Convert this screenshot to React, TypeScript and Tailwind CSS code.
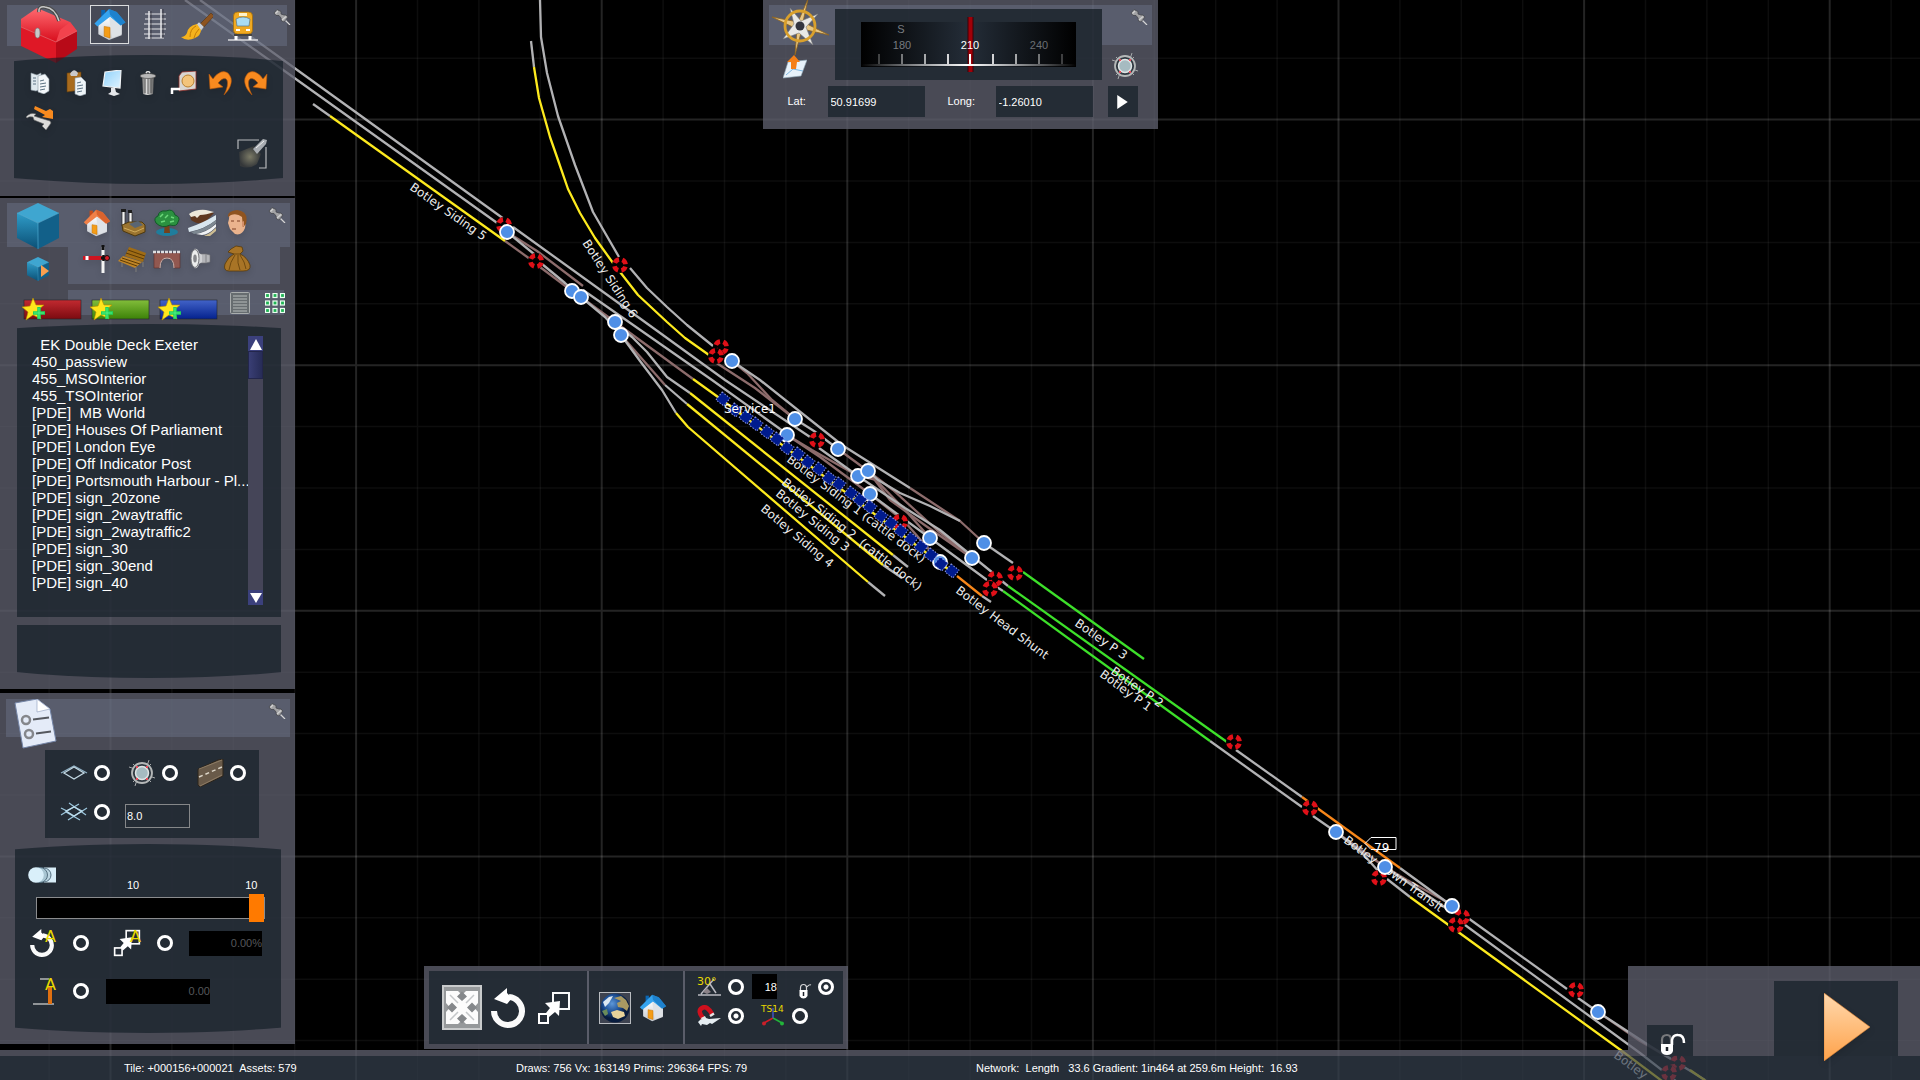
import { useState } from "react";
import type { ReactNode } from "react";

const assets = [
    "  EK Double Deck Exeter",
    "450_passview",
    "455_MSOInterior",
    "455_TSOInterior",
    "[PDE]  MB World",
    "[PDE] Houses Of Parliament",
    "[PDE] London Eye",
    "[PDE] Off Indicator Post",
    "[PDE] Portsmouth Harbour - Pl...",
    "[PDE] sign_20zone",
    "[PDE] sign_2waytraffic",
    "[PDE] sign_2waytraffic2",
    "[PDE] sign_30",
    "[PDE] sign_30end",
    "[PDE] sign_40",
];

/* ---------- Track map data ---------- */

const GRID = 61.4;

const GREY = "#b2b2b4";
const ROSE = "#8d6c6c";
const YELLOW = "#fdea1e";
const GREEN = "#3de02a";
const ORANGE = "#f8871a";

const tracks: [string, string][] = [
    // siding leads and crossovers
    [ROSE, "505,241 530,259"],
    [ROSE, "507,232 537,251 583,286"],
    [ROSE, "540,267 572,291"],
    [ROSE, "581,297 615,322 693,379"],
    [ROSE, "621,335 665,385"],
    [ROSE, "715,362 755,388 795,419"],
    [ROSE, "732,361 747,373 772,400 795,419"],
    [ROSE, "787,435 812,450 858,476"],
    [ROSE, "787,435 820,457 870,494 905,522 940,562"],
    [ROSE, "838,449 868,471 893,490 937,530 972,558"],
    [ROSE, "858,476 876,480 905,510 930,538"],
    [ROSE, "868,471 890,500 926,526 972,558"],
    [ROSE, "910,488 960,521 984,543"],
    [ROSE, "1336,832 1385,867"],
    [ROSE, "1385,867 1407,880 1447,902"],
    [ROSE, "1598,1012 1640,1041 1676,1062"],
    // running lines
    [GREY, "200,0 300,72 504,219"],
    [GREY, "185,0 300,82 500,225"],
    [GREY, "513,227 638,317 725,380 810,437"],
    [GREY, "583,290 712,380 787,434"],
    [GREY, "507,232 534,254"],
    [GREY, "542,264 565,283 581,297"],
    [GREY, "581,297 605,317 621,335"],
    [GREY, "621,335 640,361 662,390 676,413"],
    [GREY, "665,385 687,404"],
    [GREY, "621,328 632,337 647,352 667,377 690,393"],
    [GREY, "732,361 760,380 842,445 910,488"],
    [GREY, "795,419 814,431 838,449"],
    [GREY, "819,448 858,476 905,508 940,530 993,573"],
    [GREY, "868,471 878,480 900,493 930,506 960,521"],
    [GREY, "870,494 930,538 987,580"],
    [GREY, "984,543 1013,563"],
    [GREY, "997,577 1008,586"],
    [GREY, "992,584 1003,591"],
    [GREY, "313,104 330,116"],
    [GREY, "540,0 541,37 547,73 558,116 575,165 593,212 619,257"],
    [GREY, "630,268 647,288 667,307 687,325 713,346"],
    [GREY, "531,41 534,67"],
    [GREY, "893,555 908,567"],
    [GREY, "883,565 902,578"],
    [GREY, "868,582 885,596"],
    [GREY, "982,596 991,602"],
    [GREY, "1236,750 1302,797"],
    [GREY, "1210,741 1302,807"],
    [GREY, "1313,816 1336,832 1362,853 1380,873"],
    [GREY, "1387,879 1410,897"],
    [GREY, "1400,868 1452,906"],
    [GREY, "1385,867 1452,912"],
    [GREY, "1468,918 1567,989"],
    [GREY, "1465,925 1640,1053 1690,1092"],
    [GREY, "1578,998 1598,1012"],
    [GREY, "1598,1012 1650,1046 1705,1080"],
    // sidings
    [YELLOW, "330,116 505,241"],
    [YELLOW, "534,67 539,98 550,137 558,160 568,189 580,213 595,238 613,263 638,295 667,322 685,338 709,355"],
    [YELLOW, "693,379 718,397 952,572"],
    [YELLOW, "690,393 893,555"],
    [YELLOW, "687,404 883,565"],
    [YELLOW, "676,413 688,427 868,582"],
    [YELLOW, "1410,897 1622,1051 1662,1081"],
    [YELLOW, "1690,1070 1706,1081"],
    // platforms
    [GREEN, "1023,572 1144,659"],
    [GREEN, "1008,586 1227,742"],
    [GREEN, "1003,591 1210,741"],
    // occupied
    [ORANGE, "957,576 982,596"],
    [ORANGE, "1302,797 1400,868"],
];

const signals = [
    [504, 225], [536, 261], [620, 265], [721, 347], [716, 356], [817, 440], [900, 522],
    [1015, 573], [995, 579], [990, 589], [1234, 742], [1310, 808], [1379, 878], [1462, 917],
    [1456, 925], [1576, 990], [1678, 1063], [1669, 1073],
];

const junctions = [
    [507, 232], [572, 291], [581, 297], [615, 322], [621, 335], [732, 361], [795, 419], [787, 435],
    [838, 449], [858, 476], [868, 471], [870, 494], [930, 538], [940, 562], [984, 543], [972, 558],
    [1336, 832], [1385, 867], [1452, 906], [1598, 1012],
];

const wagons = [
    [723, 399], [735, 410], [746, 417], [756, 424], [767, 432], [777, 439], [787, 448], [798, 454],
    [808, 462], [819, 469], [829, 478], [839, 484], [851, 493], [860, 500], [870, 507], [881, 516],
    [891, 523], [901, 531], [911, 539], [921, 547], [931, 555], [941, 564], [952, 571],
];

const labels: [string, number, number, number][] = [
    ["Botley Siding 5", 409, 189, 35],
    ["Botley Siding 6", 582, 243, 57],
    ["Botley Siding 1 (cattle dock)", 786, 461, 37],
    ["Botley Siding 2\u00a0\u00a0(cattle dock)", 781, 484, 38],
    ["Botley Siding 3", 775, 495, 39],
    ["Botley Siding 4", 760, 510, 40],
    ["Botley Head Shunt", 955, 592, 37],
    ["Botley P 3", 1074, 625, 35],
    ["Botley P 2", 1110, 673, 35],
    ["Botley P 1", 1099, 676, 36],
    ["Botley Down Transit", 1343, 842, 36],
    ["Botley", 1613, 1057, 36],
];

function TrackMap() {
    const steps = Array.from({ length: 70 }, (_, i) => i);
    return (
        <svg className="absolute inset-0 h-full w-full" aria-label="Track map">
            <defs>
                <linearGradient id="red" x1="0" y1="0" x2="0" y2="1"><stop offset="0" stopColor="#ff6a70" /><stop offset="1" stopColor="#d80d1c" /></linearGradient>
                <linearGradient id="cube" x1="0" y1="0" x2="0" y2="1"><stop offset="0" stopColor="#2f9cc8" /><stop offset="1" stopColor="#0b5076" /></linearGradient>
                <linearGradient id="wall" x1="0" y1="0" x2="0" y2="1"><stop offset="0" stopColor="#ffffff" /><stop offset="1" stopColor="#c4c8ce" /></linearGradient>
                <linearGradient id="metal" x1="0" y1="0" x2="1" y2="0"><stop offset="0" stopColor="#6d6d6d" /><stop offset=".4" stopColor="#e2e2e2" /><stop offset="1" stopColor="#5a5a5a" /></linearGradient>
                <linearGradient id="screen" x1="0" y1="0" x2="1" y2="1"><stop offset="0" stopColor="#8fd2fb" /><stop offset="1" stopColor="#dff3ff" /></linearGradient>
                <linearGradient id="amber" x1="0" y1="0" x2="0" y2="1"><stop offset="0" stopColor="#ffd9ae" /><stop offset="1" stopColor="#ffa24a" /></linearGradient>
                <linearGradient id="dial" x1="0" y1="0" x2="1" y2="0"><stop offset="0" stopColor="#000" /><stop offset=".5" stopColor="#242d38" /><stop offset="1" stopColor="#000" /></linearGradient>
                <linearGradient id="dialLine" x1="0" y1="0" x2="1" y2="0"><stop offset="0" stopColor="#fff" stopOpacity="0" /><stop offset=".5" stopColor="#fff" /><stop offset="1" stopColor="#fff" stopOpacity="0" /></linearGradient>
                <radialGradient id="sea" cx=".4" cy=".35"><stop offset="0" stopColor="#5d97d8" /><stop offset=".6" stopColor="#1c4e94" /><stop offset="1" stopColor="#081c3e" /></radialGradient>
                <radialGradient id="beam"><stop offset="0" stopColor="#7b7a66" /><stop offset="1" stopColor="#35383a" /></radialGradient>
            </defs>
            {steps.map((i) => (
                <path
                    key={i}
                    d={`M${(110.5 + (i - 1) * GRID).toFixed(1)} 0v3000M0 ${(119.6 + (i - 1) * GRID).toFixed(1)}h5000`}
                    stroke="#fff"
                    strokeOpacity={(i - 1) % 4 === 0 ? 0.14 : 0.05}
                    strokeWidth={(i - 1) % 4 === 0 ? 2 : 1.5}
                />
            ))}
            {tracks.map(([color, points], i) => (
                <polyline key={i} points={points} fill="none" stroke={color} strokeWidth="2.3" strokeLinejoin="round" />
            ))}
            {signals.map(([x, y], i) => (
                <g key={i}>
                    <circle cx={x} cy={y} r="8" />
                    <circle
                        cx={x}
                        cy={y}
                        r="5.6"
                        fill="none"
                        stroke="#e01018"
                        strokeWidth="4.6"
                        strokeDasharray="5.4 3.4"
                        strokeDashoffset="-1.7"
                    />
                </g>
            ))}
            <g fontFamily="'DejaVu Sans', sans-serif" fontSize="12" fill="#ececec">
                {labels.map(([text, x, y, angle]) => (
                    <text key={text} x={x} y={y} transform={`rotate(${angle} ${x} ${y})`}>{text}</text>
                ))}
            </g>
            {junctions.map(([x, y], i) => (
                <circle key={i} cx={x} cy={y} r="7" fill="#4f8fe6" stroke="#fff" strokeWidth="1.8" />
            ))}
            {wagons.map(([x, y], i) => (
                <rect
                    key={i}
                    x={x - 5}
                    y={y - 5}
                    width="10"
                    height="10"
                    transform={`rotate(38 ${x} ${y})`}
                    fill="#001b8e"
                    stroke="#8d9be8"
                    strokeDasharray="1.5 1.5"
                />
            ))}
            <g fontFamily="'DejaVu Sans', sans-serif" fontSize="12" fill="#fff">
                <text x="724" y="413">Service1</text>
                <path d="M1365 843.500L1371 837.500H1396V849.500H1371Z" fill="none" stroke="#fff" />
                <text x="1374" y="852">79</text>
            </g>
        </svg>
    );
}

/* ---------- Icons ---------- */

type IconProps = { className?: string };

const Pin = () => (
    <svg className="h-4 w-[18px]" viewBox="0 0 18 16">
        <path d="M11 10L17 16" stroke="#d5d5d5" strokeWidth="1.2" />
        <path d="M1 4L4 .5L8 2.500L8 5L11 6L13 6L15 8L11 13L8.500 12L8 9L6 6.500L3 6.500Z" fill="#a2a2a4" stroke="#45464c" strokeWidth=".8" />
        <path d="M2.500 4.500L5 2M9 11L13 7.500" stroke="#d2d2d2" strokeWidth="1.2" />
    </svg>
);

const Toolbox = () => (
    <svg className="h-[58px] w-[58px] shrink-0" viewBox="0 0 58 58">
        <path d="M1 22V14L17 3L50 17L57 26L36 37Z" fill="url(#red)" />
        <path d="M1 22L36 37V58L1 41Z" fill="#df1826" />
        <path d="M36 37L57 26V44L36 58Z" fill="#b80a18" />
        <path d="M36 37L40 25L50 17L57 26Z" fill="#f2434d" />
        <path d="M1 22L36 37L57 26" fill="none" stroke="#f0656c" strokeWidth=".7" />
        <path d="M19 7Q18 1 25 2Q35 3 39 16" fill="none" stroke="#4a4a4a" strokeWidth="3.5" />
        <path d="M19 7Q18 1 25 2Q35 3 39 16" fill="none" stroke="#c9c9c9" strokeWidth="1.5" />
        <ellipse cx="17.5" cy="28" rx="2.5" ry="5" fill="#c8c8c8" stroke="#777" strokeWidth=".7" />
    </svg>
);

const House = ({ roof, dark, className }: IconProps & { roof: string; dark: string }) => (
    <svg className={className} viewBox="0 0 32 34">
        <path d="M4 16L15 8L28 17V28L15 33L4 27Z" fill="url(#wall)" />
        <path d="M15 9L18 31L28 27V17Z" fill="#dfe2e6" />
        <path d="M10 19L16 20V31L10 29Z" fill="#f49c16" stroke="#c87400" strokeWidth=".6" />
        <path d="M7 2H11V9H7Z" fill={dark} />
        <path d="M15 1L23 4L32 15L27 18L16 9L3 19L0 16Z" fill={roof} />
        <path d="M15 1L23 4L32 15L27 18L16 7Z" fill={dark} fillOpacity=".55" />
    </svg>
);

const Rails = () => (
    <svg className="h-8 w-7" viewBox="0 0 28 32" fill="none" stroke="#e3e4e8">
        <path d="M8 2V30M20 0V29" strokeWidth="1.5" />
        <path d="M4 5H25M4 10H25M3 15H25M3 20H25M3 25H24M4 29H23" strokeWidth="1.1" />
        <path d="M10 2V30M22 0V29" stroke="#2b2d33" strokeWidth=".7" />
    </svg>
);

const Brush = () => (
    <svg className="h-7 w-8" viewBox="0 0 32 28">
        <path d="M18 12L30 0L33 3L22 15Z" fill="#8d5420" stroke="#4e2c0c" strokeWidth=".5" />
        <path d="M15 12L18 9L23 14L20 18Z" fill="#c9ced6" stroke="#666" strokeWidth=".5" />
        <path d="M16 11Q7 13 6 20Q4 24 0 24Q6 29 14 25Q20 22 20 17Z" fill="#f5b21c" />
        <path d="M15 13Q9 16 9 24M18 16Q14 20 13 25" stroke="#c47b05" fill="none" />
    </svg>
);

const TrainFront = () => (
    <svg className="h-8 w-9" viewBox="0 0 36 32">
        <path d="M3 31H33" stroke="#d8d8dc" strokeWidth="1.5" />
        <path d="M11 26V31M25 26V31" stroke="#fff" strokeWidth="3" />
        <rect x="8.5" y="3" width="19" height="22" rx="4" fill="#f0a921" stroke="#a46a05" strokeWidth=".7" />
        <path d="M11 10Q18 6 25 10L24 17H12Z" fill="#a9dcf4" stroke="#58798c" strokeWidth=".7" />
        <rect x="14" y="4" width="8" height="3" fill="#fff3c9" />
        <path d="M11 21H15M21 21H25" stroke="#fff" strokeWidth="2" />
        <path d="M9 26H27" stroke="#444" strokeWidth="2" />
    </svg>
);

const Copy = () => (
    <svg className="h-[22px] w-5" viewBox="0 0 20 22">
        <path d="M1 1L7 3L11 1V17L6 19L1 18Z" fill="#dfe8ee" stroke="#8b98a3" strokeWidth=".6" />
        <path d="M8 4L15 2L19 7V19L14 22L8 20Z" fill="#f3f7fa" stroke="#8b98a3" strokeWidth=".6" />
        <path d="M3 6H6M3 9H6M3 12H6M10 9L14 8M10 12L16 11M10 15L16 14M10 18L15 17" stroke="#5c7384" />
    </svg>
);

const Paste = () => (
    <svg className="h-[26px] w-5" viewBox="0 0 20 26">
        <path d="M1 3L15 2V20L1 22Z" fill="#a86b1d" stroke="#5e3a0c" strokeWidth=".6" />
        <path d="M4 4Q8-3 12 3L11 6H5Z" fill="#c9c9cb" />
        <path d="M9 8L15 7L20 12V24L14 26L9 24Z" fill="#eef4f8" stroke="#8b98a3" strokeWidth=".6" />
        <path d="M11 13L15 12M11 16L17 15M11 19L17 18M11 22L16 21" stroke="#5c7384" />
    </svg>
);

const Monitor = () => (
    <svg className="h-[26px] w-5" viewBox="0 0 20 26">
        <path d="M3 2L19 0L18 18L1 16Z" fill="url(#screen)" stroke="#f2f5f7" strokeWidth="1.2" />
        <path d="M9 18H13L14 22L18 24L12 26L6 24L9 22Z" fill="#e5e7ea" />
    </svg>
);

const Bin = () => (
    <svg className="h-6 w-4" viewBox="0 0 16 24">
        <path d="M2 6H14L13 23Q8 25 3 23Z" fill="url(#metal)" />
        <path d="M5 8V22M8 8V23M11 8V22" stroke="#444" strokeWidth=".8" />
        <ellipse cx="8" cy="5" rx="8" ry="2.5" fill="#b7b7b7" stroke="#444" strokeWidth=".7" />
        <path d="M6 2Q8-1 10 2" stroke="#ddd" fill="none" strokeWidth="1.5" />
    </svg>
);

const Tape = () => (
    <svg className="h-6 w-7" viewBox="0 0 28 24">
        <path d="M12 1L26 0V18L9 20V5Z" fill="#d9d6d2" stroke="#8f2e2a" strokeWidth=".8" />
        <circle cx="18" cy="10" r="6" fill="#f3c47b" stroke="#b98030" />
        <path d="M1 18H10M2 17V23" stroke="#fff" strokeWidth="2.5" />
    </svg>
);

const Undo = ({ className = "" }: IconProps) => (
    <svg className={`h-6 w-6 ${className}`} viewBox="0 0 24 24">
        <path d="M1 3L2 18L15 16L10 12Q16 5 19 9Q21 14 16 24Q25 15 23 7Q20-1 13 1Q8 3 5 8Z" fill="#f88a1f" stroke="#b4560a" strokeWidth=".6" />
    </svg>
);

const Flip = () => (
    <svg className="h-6 w-7" viewBox="0 0 28 24">
        <path d="M0 11Q4 6 10 8L8 10L14 12L24 15L25 17L20 24L16 20L18 18L8 14L7 11Q3 10 1 12Z" fill="#dcdcda" stroke="#6c6c6c" strokeWidth=".6" />
        <path d="M9 0L20 5L24 3L27 5V13L16 11L19 9L8 3Z" fill="#f88a1f" />
    </svg>
);

const Torch = () => (
    <svg className="h-[30px] w-[30px]" viewBox="0 0 30 30">
        <path d="M2 13L17 7L24 15L20 25Q12 31 3 27Z" fill="url(#beam)" />
        <path d="M16 10L26 0L30 1L29 5L20 15Z" fill="#a9adb2" />
        <path d="M19 9L27 2" stroke="#f0f0f0" />
        <path d="M1 10V1H22M29 8V29H22" fill="none" stroke="#b7babd" strokeWidth="1.2" />
    </svg>
);

const Cube = ({ className }: IconProps) => (
    <svg className={className} viewBox="0 0 42 46">
        <path d="M21 0L42 10L21 20L0 10Z" fill="#3fa6d0" />
        <path d="M0 10L21 20V46L0 35Z" fill="url(#cube)" />
        <path d="M42 10L21 20V46L42 35Z" fill="#126089" />
        <path d="M0 10L21 20L42 10M21 20V46" stroke="#58b6dc" fill="none" strokeWidth=".6" />
    </svg>
);

const Factory = () => (
    <svg className="h-7 w-7" viewBox="0 0 28 28">
        <path d="M4 2H7V17H4ZM11 3H14V16H11Z" fill="#f1f1f1" stroke="#222" strokeWidth=".7" />
        <path d="M3 0H8V3H3ZM10 1H14V4H10Z" fill="#1d1d1d" />
        <path d="M4 16L11 13H24L27 16V23L17 27L5 22Z" fill="#9b742f" stroke="#4e390e" />
        <path d="M11 15L20 12L25 16L17 19Z" fill="#596573" />
        <path d="M6 19L17 23L26 19" stroke="#d1ac5c" fill="none" />
    </svg>
);

const Tree = () => (
    <svg className="h-7 w-7" viewBox="0 0 28 28">
        <ellipse cx="14" cy="23" rx="11" ry="4" fill="#1f7d9c" />
        <path d="M12 14L11 24L17 24L16 14Z" fill="#76421a" />
        <path d="M3 14Q0 9 5 7Q6 1 13 2Q20-1 22 6Q28 8 25 13Q24 18 17 16Q9 20 3 14Z" fill="#2b9140" stroke="#13582a" />
        <path d="M7 8L10 5M12 9L15 6M18 8L21 9M8 13L12 12M17 13L21 12" stroke="#6bd77a" strokeWidth="1.5" />
    </svg>
);

const Roads = () => (
    <svg className="h-7 w-7" viewBox="0 0 28 28">
        <path d="M2 6Q7 2 20 3L26 4L20 10L18 14Q10 16 3 11Z" fill="#5f371f" />
        <path d="M1 5Q8 0 18 1L26 3Q18 6 12 6L9 9L7 7L3 8Z" fill="#eee8da" />
        <path d="M0 19Q15 14 28 6V11Q17 20 1 23Z" fill="#d9e6ee" />
        <path d="M3 23Q17 20 28 11V14Q20 23 6 25Z" fill="#7d8891" />
        <path d="M8 25Q19 23 28 15V18Q20 26 14 26Z" fill="#f0f3f5" />
        <path d="M16 27Q23 24 28 19V22L22 27Z" fill="#cdbd92" />
    </svg>
);

const Face = () => (
    <svg className="h-7 w-7" viewBox="0 0 28 28">
        <path d="M6 10Q6 2 14 2Q23 2 23 11L22 19Q19 27 12 25L7 20L5 14Z" fill="#eab38d" />
        <path d="M5 8Q4 2 14 1Q26 2 23 15L20 18L19 8Q14 4 8 6Z" fill="#8f5420" />
        <path d="M8 12H11M14 12H17M9 20H13" stroke="#7c3e22" />
        <path d="M19 13L21 12V17L19 18Z" fill="#d5916b" />
    </svg>
);

const Semaphore = () => (
    <svg className="h-7 w-7" viewBox="0 0 28 28">
        <path d="M20 2V28" stroke="#f4f4f4" strokeWidth="3" />
        <path d="M20 0V5" stroke="#111" strokeWidth="3" />
        <path d="M0 13H23" stroke="#cf1420" strokeWidth="4" />
        <path d="M4 11V15" stroke="#fff" strokeWidth="3" />
        <path d="M18 13H26M20.500 10V16" stroke="#111" strokeWidth="2.5" />
        <circle cx="24" cy="13" r="2.5" fill="#d61a26" stroke="#111" />
    </svg>
);

const Bench = () => (
    <svg className="h-7 w-7" viewBox="0 0 28 28">
        <path d="M11 2L28 8L25 17L7 11Z" fill="#a06c15" />
        <path d="M5 11L24 17L17 23L0 16Z" fill="#bf8527" />
        <path d="M10 5L27 11M8 8L26 14M4 13L22 19M2 15L19 21" stroke="#5b3a05" />
        <path d="M4 18V22M18 22V27M25 17V22" stroke="#777" strokeWidth="1.2" />
    </svg>
);

const Bridge = () => (
    <svg className="h-7 w-7" viewBox="0 0 28 28">
        <path d="M1 8H27V23H21Q21 13 14 13Q7 13 7 23H1Z" fill="#925850" stroke="#5c2e29" strokeWidth=".6" />
        <path d="M7 23Q7 13 14 13Q21 13 21 23" fill="none" stroke="#cdb4ae" />
        <path d="M0 7H28" stroke="#dedfe2" strokeWidth="2.5" strokeDasharray="3 1" />
    </svg>
);

const Speaker = () => (
    <svg className="h-7 w-7" viewBox="0 0 28 28">
        <path d="M11 9H18L22 10V17L18 18H11Z" fill="#b4b5b9" stroke="#6f7074" strokeWidth=".6" />
        <path d="M6 4Q10 3 11 8L14 10V17L11 19Q10 24 6 23Z" fill="#cfd0d3" />
        <ellipse cx="7" cy="13.5" rx="4" ry="9" fill="#eceded" stroke="#77787c" />
        <ellipse cx="7" cy="13.5" rx="1.8" ry="4" fill="#85868a" />
        <path d="M18 9V18" stroke="#808185" />
    </svg>
);

const Sack = () => (
    <svg className="h-7 w-7" viewBox="0 0 28 28">
        <path d="M8 4L13 1L19 2L20 6L17 9Q24 12 27 20Q28 26 20 26H6Q0 26 2 19Q5 12 11 9L5 7Z" fill="#a87426" stroke="#5b3b08" strokeWidth=".8" />
        <path d="M11 9L17 9M12 10Q7 17 6 25M15 10Q14 18 17 25M17 10Q22 17 23 24" stroke="#704a10" fill="none" />
    </svg>
);

const FavouriteBar = ({ from, to, label }: { from: string; to: string; label: string }) => (
    <button aria-label={label} className="h-5 w-[59px]">
        <svg className="h-full w-full overflow-visible" viewBox="0 0 59 20">
            <defs>
                <linearGradient id={label} x1="0" y1="0" x2="0" y2="1"><stop offset="0" stopColor={from} /><stop offset="1" stopColor={to} /></linearGradient>
            </defs>
            <rect x="2" y="1" width="57" height="19" fill={`url(#${label})`} stroke="#22252c" strokeWidth=".6" />
            <path d="M11-1L14 6L22 6L16 11L19 20L11 16L4 21L6 13L0 8L8 7Z" fill="#ffe61c" stroke="#b98a00" strokeWidth=".6" />
            <path d="M17 8V20M11 14H23" stroke="#1fd35c" strokeWidth="3.5" />
            <path d="M17 9V19M12 14H22" stroke="#5df48b" strokeWidth=".8" />
        </svg>
    </button>
);

const ListIcon = () => (
    <svg className="h-[22px] w-5" viewBox="0 0 20 22">
        <rect x=".5" y=".5" width="19" height="21" rx="1" fill="#676d70" stroke="#a9adad" />
        <path d="M3 4H17M3 7H17M3 10H17M3 13H17M3 16H17M3 19H17" stroke="#b8bdbb" />
    </svg>
);

const GridIcon = () => (
    <svg className="h-5 w-5" viewBox="0 0 20 20">
        {[0, 7.5, 15].map((y) =>
            [0, 7.5, 15].map((x) => (
                <rect key={`${x}-${y}`} x={x + 0.5} y={y + 0.5} width="4" height="4" fill="#1fb454" stroke="#eafff0" strokeWidth="1.2" />
            ))
        )}
    </svg>
);

const Sheet = () => (
    <svg className="h-[50px] w-[43px] shrink-0" viewBox="0 0 43 50">
        <path d="M1 4L23 0L36 10L42 42L9 49Z" fill="#e4ebf8" stroke="#7586a8" />
        <path d="M23 0L36 10L23 13Z" fill="#fff" stroke="#9aa8c4" strokeWidth=".7" />
        <circle cx="12" cy="21" r="4" fill="none" stroke="#85878c" strokeWidth="2.5" />
        <circle cx="15" cy="35" r="4" fill="none" stroke="#85878c" strokeWidth="2.5" />
        <path d="M19 20.500L35 18.500M22 34.500L37 32.500" stroke="#55585f" strokeWidth="1.8" />
    </svg>
);

const Tile = () => (
    <svg className="h-4 w-7" viewBox="0 0 28 16" fill="none">
        <path d="M1 8L14 1L27 8" stroke="#8fb0c4" strokeWidth="1.3" />
        <path d="M4 8L14 2L24 8L14 14Z" stroke="#c3d8e3" strokeWidth="1.3" />
    </svg>
);

const Tiles = () => (
    <svg className="h-5 w-7" viewBox="0 0 28 20" fill="none">
        <path d="M1 6L7 9L19 2M9 1L26 13M27 6L8 18M1 13L6 10L20 18" stroke="#9cc6dc" strokeWidth="1.3" />
        <path d="M6 9L14 5L22 9L14 14Z" stroke="#bcdcec" strokeWidth="1.3" />
    </svg>
);

const MiniCompass = ({ className = "h-[26px] w-7" }: IconProps) => (
    <svg className={className} viewBox="0 0 26 26">
        <path d="M4 4L22 22M22 4L4 22M20 0L18 6M6 26L8 20M0 7L6 9M26 18L20 16" stroke="#a6a9aa" />
        <circle cx="13" cy="13" r="10" fill="#303840" stroke="#b5b8b8" strokeWidth="1.8" />
        <circle cx="13" cy="13" r="6.5" fill="#a6bbc1" stroke="#dfe4e4" strokeWidth="1.5" />
        <path d="M7 7H9M17 7H19M7 19H9M17 19H19" stroke="#e84a5a" strokeWidth="2" />
    </svg>
);

const Road = () => (
    <svg className="h-7 w-7" viewBox="0 0 28 28">
        <path d="M2 10L22 1L27 0V17L4 28L2 26Z" fill="#695a49" stroke="#2c241b" />
        <path d="M3 10L26 1M4 27L26 16" stroke="#8d7b64" />
        <path d="M3 18L26 8" stroke="#ddd6c8" strokeWidth="1.5" strokeDasharray="4 3" />
    </svg>
);

const Toggle = () => (
    <svg className="h-4 w-7" viewBox="0 0 28 16">
        <rect x="16" y=".5" width="12" height="15" fill="#d8edf8" />
        <circle cx="16" cy="8" r="7" fill="#bcd6e2" stroke="#567081" />
        <circle cx="12" cy="8" r="7.5" fill="#a8c5d2" stroke="#567081" />
        <circle cx="8" cy="8" r="7.8" fill="#d9effa" />
    </svg>
);

const RotateIcon = ({ className }: IconProps) => (
    <svg className={className} viewBox="0 0 36 40">
        <path d="M4 23A14 14 0 1 0 19 9" fill="none" stroke="#fafafa" strokeWidth="6" />
        <path d="M4 11L17 0V5L22 10L17 16Z" fill="#fff" />
    </svg>
);

const ScaleIcon = ({ className }: IconProps) => (
    <svg className={className} viewBox="0 0 32 34">
        <rect x="15" y="2" width="16" height="16" fill="none" stroke="#fafafa" strokeWidth="2" />
        <path d="M7 12L22 10L21 25L17 21L11 26L8 22L12 17Z" fill="#fff" />
        <rect x="1" y="23" width="9" height="9" fill="#252d37" stroke="#fff" strokeWidth="2" />
    </svg>
);

const HeightIcon = () => (
    <svg className="h-7 w-7" viewBox="0 0 28 28">
        <path d="M12 2H21M5 27H26" stroke="#b4b6b8" strokeWidth="1.5" />
        <path d="M22 10V27" stroke="#e07011" strokeWidth="4" />
    </svg>
);

const CompassRose = () => (
    <svg className="h-[58px] w-[58px] shrink-0 overflow-visible" viewBox="0 0 58 58">
        <path d="M36-6L31 17L57 30L30 24L23 50L25 24L0 12L26 17Z" fill="#e8c886" stroke="#91631a" strokeWidth=".8" />
        <path d="M18 3L29 16L46 9L34 22L41 40L27 28L11 34L22 19Z" fill="#e9e9e6" stroke="#7b7b7b" strokeWidth=".6" />
        <circle cx="28" cy="21" r="15" fill="none" stroke="#d9a02c" strokeWidth="2.8" />
        <circle cx="28" cy="21" r="4.5" fill="#33353f" />
    </svg>
);

const MapUp = () => (
    <svg className="h-6 w-6" viewBox="0 0 24 24">
        <path d="M5 7L24 5L18 21L0 23Z" fill="#e8f2fa" stroke="#8fa6b5" strokeWidth=".6" />
        <path d="M3 20L10 14L20 16" stroke="#7fb7e0" fill="none" />
        <path d="M11 0L17 7H14L13 14H8V7H4Z" fill="#f57f17" />
    </svg>
);

const MoveIcon = () => (
    <svg className="h-[45px] w-10" viewBox="0 0 40 45">
        <rect x="1" y="1" width="38" height="43" fill="#96999b" stroke="#c9cbcc" strokeWidth="2" />
        <path d="M4 6H16L20 10L24 6H36V18L32 22.500L36 27V39H24L20 35L16 39H4V27L8 22.500L4 18Z" fill="#fcfcfc" />
        <path d="M20 6.500L25 11.500L20 16L15 11.500ZM20 38.500L25 33.500L20 29L15 33.500ZM5 22.500L10 17.500L15 22.500L10 27.500ZM35 22.500L30 17.500L25 22.500L30 27.500Z" fill="#85888b" />
        <path d="M8 10L16 18M32 10L24 18M8 35L16 27M32 35L24 27" stroke="#c4c7c9" strokeWidth="1.5" />
    </svg>
);

const Earth = () => (
    <svg className="h-8 w-8" viewBox="0 0 32 32">
        <rect x=".5" y=".5" width="31" height="31" fill="#3e4350" stroke="#b9bcc0" />
        <circle cx="16" cy="16" r="14.5" fill="url(#sea)" />
        <path d="M15 6L22 4L27 8L30 14L28 19L24 16L19 15L18 11L22 9Z" fill="#a99a62" />
        <path d="M12 20L18 18L25 20L26 24L19 27L14 25Z" fill="#e6d29a" />
        <path d="M4 10L10 5L14 4L10 11L6 15Z" fill="#dce8f2" />
        <path d="M3 19L8 17L9 22L6 24Z" fill="#6a8b5a" />
    </svg>
);

const AngleIcon = () => (
    <svg className="h-[22px] w-6" viewBox="0 0 24 22">
        <path d="M1 19H24M4 18L17 3M19 17L13 8" stroke="#b9b9c0" strokeWidth="1.5" />
        <path d="M6 16L10 12L14 16L10 18Z" fill="#8b8288" />
    </svg>
);

const Magnet = () => (
    <svg className="h-[22px] w-6" viewBox="0 0 24 22">
        <path d="M1 17L6 12L12 14L24 13L15 19L13 18L10 20L5 19L4 21Z" fill="#e6eef2" />
        <path d="M6 13Q0 6 5 3Q10 0 15 9" fill="none" stroke="#d0101d" strokeWidth="4.5" />
        <path d="M4.500 14L8.500 12M13 11L17 8.500" stroke="#e4e4e4" strokeWidth="2.5" />
    </svg>
);

const AxisIcon = () => (
    <svg className="h-[22px] w-6" viewBox="0 0 24 22">
        <path d="M12 13L3 18" stroke="#d51a26" strokeWidth="1.5" />
        <path d="M12 13L21 18" stroke="#22b43a" strokeWidth="1.5" />
        <path d="M12 3V13" stroke="#4052c4" strokeWidth="1.5" />
        <circle cx="3" cy="18.500" r="2" fill="#c8202a" />
        <circle cx="21" cy="18.500" r="2" fill="#22b43a" />
    </svg>
);

const Padlock = ({ className }: IconProps) => (
    <svg className={className} viewBox="0 0 26 23">
        <path d="M2 12V7Q2 2 7 2Q11 2 11 7V12" fill="none" stroke="#77797c" strokeWidth="2.2" />
        <path d="M12 12V7Q13 1.500 18 2Q24 2 24 10" fill="none" stroke="#fff" strokeWidth="2.5" />
        <path d="M1 11H13V18Q12 22 7 22Q2 22 1 18Z" fill="#fff" />
        <path d="M7 14V18" stroke="#1c222a" strokeWidth="2.5" />
    </svg>
);

const SmallLock = () => (
    <svg className="h-4 w-3 overflow-visible" viewBox="0 0 12 16">
        <path d="M1.500 8V5Q1.500 1.500 4.500 1.500Q7.500 1.500 7.500 5V8M8 4Q10 1 12 2" fill="none" stroke="#d6d7d9" strokeWidth="1.2" />
        <path d="M.5 7H8.500V13Q7 15.500 4.500 15.500Q2 15.500 .5 13Z" fill="#fff" />
        <path d="M4.500 9V13" stroke="#1c222a" strokeWidth="1.5" />
    </svg>
);

/* ---------- Shared pieces ---------- */

const panel = "bg-[#5f606e]/77";
const strip = "bg-[#7f8aa6]/30";
const well = "bg-[#111b25]/65";

function Cell({ label, children }: { label: string; children: ReactNode }) {
    return (
        <button aria-label={label} className="flex h-[35px] w-[35px] shrink-0 items-center justify-center drop-shadow-md">
            {children}
        </button>
    );
}

function Dot({ label, on = false }: { label: string; on?: boolean }) {
    const [checked, setChecked] = useState(on);
    return (
        <input
            type="checkbox"
            aria-label={label}
            checked={checked}
            onChange={() => setChecked(!checked)}
            className="size-4 shrink-0 appearance-none rounded-full border-3 border-white checked:bg-[radial-gradient(circle,#fff_2px,transparent_3px)]"
        />
    );
}

// Icon with a yellow caption lying over its corner
function Tagged({ tag, className, children }: { tag: string; className: string; children: ReactNode }) {
    return (
        <span className="relative shrink-0">
            {children}
            <span className={`absolute font-['DejaVu_Sans',sans-serif] leading-none text-[#e8d800] ${className}`}>{tag}</span>
        </span>
    );
}

/* ---------- Panels ---------- */

function ToolsPanel() {
    return (
        <section className={`${panel} pt-[5px] pb-3`}>
            <div className={`${strip} ml-[7px] mr-2 flex h-[41px] items-start gap-3 pl-[13px]`}>
                <Toolbox />
                <button aria-label="Home" className="flex h-[39px] w-[39px] shrink-0 items-center justify-center border border-white/80 bg-black/20">
                    <House className="h-[33px] w-8" roof="#35a3ee" dark="#0b67b4" />
                </button>
                <button aria-label="Track tools" className="pt-1"><Rails /></button>
                <button aria-label="Paint tools" className="pt-2"><Brush /></button>
                <button aria-label="Rolling stock" className="pt-1"><TrainFront /></button>
                <button aria-label="Pin panel" className="ml-auto pt-1"><Pin /></button>
            </div>
            <div className={`${well} ml-[14px] mr-3 mt-[9px] px-2 pt-[10px] pb-[15px] [clip-path:ellipse(119%_50%)]`}>
                <div className="flex gap-px">
                    <Cell label="Copy"><Copy /></Cell>
                    <Cell label="Paste"><Paste /></Cell>
                    <Cell label="Display"><Monitor /></Cell>
                    <Cell label="Delete"><Bin /></Cell>
                    <Cell label="Measure"><Tape /></Cell>
                    <Cell label="Undo"><Undo /></Cell>
                    <Cell label="Redo"><Undo className="-scale-x-100" /></Cell>
                </div>
                <div className="flex">
                    <Cell label="Flip"><Flip /></Cell>
                </div>
                <div className="mt-1 flex justify-end pr-2">
                    <button aria-label="Torch"><Torch /></button>
                </div>
            </div>
        </section>
    );
}

function AssetPanel() {
    const [selected, setSelected] = useState("");
    return (
        <section className={`${panel} pt-[5px] pb-[11px]`}>
            <div className={`${strip} ml-[7px] mr-[5px] flex h-11 items-start pl-[10px]`}>
                <button aria-label="Objects" className="mr-5 shrink-0"><Cube className="h-[46px] w-[42px]" /></button>
                <div className="flex pt-[2px]">
                    <Cell label="Buildings"><House className="h-7 w-7" roof="#f08048" dark="#c84a18" /></Cell>
                    <Cell label="Industry"><Factory /></Cell>
                    <Cell label="Vegetation"><Tree /></Cell>
                    <Cell label="Roads"><Roads /></Cell>
                    <Cell label="People"><Face /></Cell>
                </div>
                <button aria-label="Pin panel" className="ml-auto pt-1 pr-1"><Pin /></button>
            </div>
            <div className="flex h-[37px]">
                <button aria-label="Next object type" className="relative mt-2.5 ml-[27px] mr-[19px] h-6 w-[22px]">
                    <Cube className="h-6 w-[22px]" />
                    <svg className="absolute right-0 bottom-1 h-3 w-2" viewBox="0 0 8 12"><path d="M0 0L8 6L0 12Z" fill="#f9a050" /></svg>
                </button>
                <div className={`${strip} mr-[15px] flex flex-1 items-center pb-[14px] pl-[11px]`}>
                    <Cell label="Signals"><Semaphore /></Cell>
                    <Cell label="Furniture"><Bench /></Cell>
                    <Cell label="Bridges"><Bridge /></Cell>
                    <Cell label="Sounds"><Speaker /></Cell>
                    <Cell label="Miscellaneous"><Sack /></Cell>
                </div>
            </div>
            <div className="relative mt-1.5 flex h-[25px] pl-[22px]">
                <div className={`${strip} absolute inset-y-0 right-[11px] left-[68px]`} />
                <div className="relative flex gap-[9px] pt-[9px]">
                    <FavouriteBar label="favourites-red" from="#c22a30" to="#7c0a10" />
                    <FavouriteBar label="favourites-green" from="#82bd3a" to="#3c8208" />
                    <FavouriteBar label="favourites-blue" from="#4263c8" to="#04228e" />
                </div>
                <div className="relative ml-[13px] flex items-center gap-[15px]">
                    <button aria-label="List view"><ListIcon /></button>
                    <button aria-label="Grid view"><GridIcon /></button>
                </div>
            </div>
            <div className={`${well} ml-[17px] mr-[14px] mt-[9px] flex py-3 pr-[18px] pl-[15px] [clip-path:ellipse(300%_100%_at_50%_100%)]`}>
                <ul className="min-w-0 flex-1 text-[15px] leading-[17px] text-white">
                    {assets.map((name) => (
                        <li key={name}>
                            <button
                                onClick={() => setSelected(name)}
                                className={`block whitespace-pre text-left ${selected === name ? "text-orange-300" : ""}`}
                            >
                                {name}
                            </button>
                        </li>
                    ))}
                </ul>
                <div className="flex h-[269px] w-[15px] shrink-0 flex-col bg-[#454558]">
                    <button aria-label="Scroll up" className="flex h-[15px] items-center justify-center bg-[#3b407c]">
                        <svg className="h-3 w-3" viewBox="0 0 12 12"><path d="M6 1L12 12H0Z" fill="#fff" /></svg>
                    </button>
                    <div className="h-7 border border-[#23264c] bg-linear-to-r from-[#393e74] to-[#272c57]" />
                    <button aria-label="Scroll down" className="mt-auto flex h-[15px] items-center justify-center bg-[#3b407c]">
                        <svg className="h-3 w-3" viewBox="0 0 12 12"><path d="M0 1H12L6 11Z" fill="#fff" /></svg>
                    </button>
                </div>
            </div>
            <div className={`${well} ml-[17px] mr-[14px] mt-2 h-[53px] [clip-path:ellipse(110%_100%_at_50%_0%)]`} />
        </section>
    );
}

function OptionsPanel() {
    const [amount, setAmount] = useState(10);
    return (
        <section className={`${panel} pt-1.5 pb-[11px]`}>
            <div className={`${strip} ml-1.5 mr-[5px] flex h-[38px] items-start pl-2`}>
                <Sheet />
                <button aria-label="Pin panel" className="ml-auto pt-1 pr-1"><Pin /></button>
            </div>
            <div className={`${well} ml-[45px] mr-9 mt-[13px] flex flex-col gap-[11px] pt-[9px] pb-3 pl-[15px]`}>
                <div className="flex h-7 gap-px">
                    <span className="flex w-[67px] items-center gap-1.5"><Tile /><Dot label="Snap to plane" /></span>
                    <span className="flex w-[67px] items-center gap-1.5"><MiniCompass /><Dot label="Snap to bearing" /></span>
                    <span className="flex items-center gap-1.5"><Road /><Dot label="Snap to road" /></span>
                </div>
                <div className="flex h-7">
                    <span className="flex w-[65px] items-center gap-1.5"><Tiles /><Dot label="Snap to grid" /></span>
                    <input aria-label="Grid size" defaultValue="8.0" className="mt-1.5 h-6 w-[65px] border border-[#858789] px-px text-[11px] text-white outline-none" />
                </div>
            </div>
            <div className={`${well} ml-[15px] mr-[14px] mt-1.5 pt-[23px] pb-7 pl-[13px] [clip-path:ellipse(150%_50%)]`}>
                <div className="flex h-[30px] text-[11px] text-white">
                    <Toggle />
                    <span className="mt-2.5 ml-[71px]">10</span>
                    <output className="mt-2.5 ml-[106px]">{amount}</output>
                </div>
                <input
                    type="range"
                    aria-label="Brush strength"
                    min="0"
                    max="10"
                    value={amount}
                    onChange={(e) => setAmount(Number(e.target.value))}
                    className="ml-2 block h-[22px] w-[229px] appearance-none border border-[#8b8c8e] bg-black [&::-webkit-slider-thumb]:h-7 [&::-webkit-slider-thumb]:w-[15px] [&::-webkit-slider-thumb]:appearance-none [&::-webkit-slider-thumb]:bg-[#ff7a00]"
                />
                <div className="mt-[10px] flex h-7 items-center">
                    <Tagged tag="A" className="top-0 right-0 text-base"><RotateIcon className="h-7 w-7" /></Tagged>
                    <span className="ml-[17px] flex"><Dot label="Auto rotate" /></span>
                    <span className="ml-6 flex"><Tagged tag="A" className="top-0 right-0 text-base"><ScaleIcon className="h-7 w-7" /></Tagged></span>
                    <span className="ml-4 flex"><Dot label="Auto scale" /></span>
                    <input aria-label="Scale percentage" defaultValue="0.00%" className="ml-4 h-[25px] w-[73px] bg-black text-right text-[11px] text-[#55575a] outline-none" />
                </div>
                <div className="mt-5 flex h-7 items-center">
                    <Tagged tag="A" className="top-0 right-0 text-base"><HeightIcon /></Tagged>
                    <span className="ml-[17px] flex"><Dot label="Auto height" /></span>
                    <input aria-label="Height offset" defaultValue="0.00" className="ml-[17px] h-[25px] w-[104px] bg-black text-right text-[11px] text-[#55575a] outline-none" />
                </div>
            </div>
        </section>
    );
}

function CompassPanel() {
    return (
        <section className={`${panel} w-[395px] pt-[5px] pb-3`}>
            <div className="grid grid-cols-[72px_267px_1fr]">
                <div>
                    <div className={`${strip} ml-1.5 h-10 pl-[3px]`}><CompassRose /></div>
                    <div className="flex justify-center pt-[10px] pr-2"><button aria-label="Jump to map"><MapUp /></button></div>
                </div>
                <div>
                    <div className={`${strip} h-1`} />
                    <div className={`${well} px-[26px] py-2`}>
                        <svg className="block h-[55px] w-[215px]" viewBox="0 0 215 55" fontFamily="'Liberation Sans', sans-serif" fontSize="11" textAnchor="middle">
                            <rect y="5" width="215" height="45" fill="url(#dial)" />
                            <rect x="106.5" width="6" height="55" fill="#3d0006" />
                            <rect x="107.5" width="4" height="55" fill="#a00008" />
                            {[18, 41, 64, 87, 109, 132, 155, 178, 201].map((x) => (
                                <rect key={x} x={x - 1} y="37" width="2" height="10" fill="#fff" fillOpacity={1 - Math.abs(x - 109) / 120} />
                            ))}
                            <rect y="47" width="215" height="2" fill="url(#dialLine)" />
                            <text x="40" y="16" fill="#777b80">S</text>
                            <text x="41" y="32" fill="#777b80">180</text>
                            <text x="109" y="32" fill="#fff">210</text>
                            <text x="178" y="32" fill="#6a6e73">240</text>
                        </svg>
                    </div>
                </div>
                <div>
                    <div className={`${strip} mr-1.5 flex h-10 justify-end pt-1 pr-1`}><button aria-label="Pin panel" className="h-4"><Pin /></button></div>
                    <div className="flex justify-center pt-2 pr-[10px]"><button aria-label="Face north"><MiniCompass className="h-[26px] w-[26px]" /></button></div>
                </div>
            </div>
            <div className="mt-1.5 flex h-[31px] items-center pl-[25px] text-[11px] text-white">
                <label htmlFor="lat" className="w-10">Lat:</label>
                <input id="lat" defaultValue="50.91699" className={`${well} h-full w-[97px] px-[3px] outline-none`} />
                <label htmlFor="long" className="ml-[23px] w-12">Long:</label>
                <input id="long" defaultValue="-1.26010" className={`${well} h-full w-[97px] px-[3px] outline-none`} />
                <button aria-label="Go to position" className={`${well} ml-[15px] flex h-full w-[30px] items-center justify-center`}>
                    <svg className="h-[14px] w-[11px]" viewBox="0 0 12 16"><path d="M0 0L12 8L0 16Z" fill="#fff" /></svg>
                </button>
            </div>
        </section>
    );
}

function TransformBar() {
    return (
        <section className={`${panel} w-[424px] p-[5px]`}>
            <div className={`${well} flex h-[73px]`}>
                <div className="flex w-[158px] items-center gap-2 pl-[13px]">
                    <button aria-label="Move"><MoveIcon /></button>
                    <button aria-label="Rotate"><RotateIcon className="h-10 w-9" /></button>
                    <button aria-label="Scale" className="ml-1"><ScaleIcon className="h-[34px] w-8" /></button>
                </div>
                <div className="flex w-24 items-center gap-2 border-l-2 border-[#5a5d69] pl-[10px]">
                    <button aria-label="World space"><Earth /></button>
                    <button aria-label="Local space"><House className="h-7 w-7" roof="#35a3ee" dark="#0b67b4" /></button>
                </div>
                <div className="flex-1 border-l-2 border-[#5a5d69] pt-[3px] pl-3 text-[11px] text-white">
                    <div className="flex h-[25px] items-center">
                        <Tagged tag="30°" className="top-0 left-0 text-[11px]"><AngleIcon /></Tagged>
                        <span className="ml-[7px] flex"><Dot label="Angle snap" /></span>
                        <input aria-label="Snap angle" defaultValue="18" className="ml-2 h-[25px] w-[25px] bg-black text-right outline-none" />
                        <span className="mt-2 ml-[22px] flex"><SmallLock /></span>
                        <span className="ml-[7px] flex"><Dot label="Lock snap" on /></span>
                    </div>
                    <div className="mt-1 flex h-[25px] items-center">
                        <Magnet />
                        <span className="ml-[7px] flex"><Dot label="Magnet" on /></span>
                        <span className="ml-[17px] flex"><Tagged tag="TS14" className="top-0 left-0 text-[9px]"><AxisIcon /></Tagged></span>
                        <span className="ml-[7px] flex"><Dot label="TS14 axes" /></span>
                    </div>
                </div>
            </div>
        </section>
    );
}

function DrivePanel() {
    return (
        <section className={`${panel} flex h-[90px] w-[292px] shrink-0 items-end justify-between pr-[22px] pl-[19px]`}>
            <button aria-label="Unlock route" className={`${well} flex h-[31px] w-[46px] items-end justify-center pl-1.5`}>
                <Padlock className="h-[23px] w-[26px]" />
            </button>
            <button aria-label="Play scenario" className={`${well} h-[75px] w-[124px] pt-3 pl-[50px]`}>
                <svg className="h-[68px] w-[46px] drop-shadow-md" viewBox="0 0 46 68"><path d="M0 0L46 34L0 68Z" fill="url(#amber)" stroke="#e08434" strokeWidth=".6" /></svg>
            </button>
        </section>
    );
}

export default function App() {
    return (
        <div className="relative flex min-h-screen w-full flex-col overflow-hidden bg-black font-['Liberation_Sans',Arial,sans-serif]">
            <TrackMap />

            {/* z-10 lets the play arrow hang over the status bar */}
            <div className="relative z-10 flex flex-1">
                {/* Left dock */}
                <aside className="flex w-[295px] shrink-0 flex-col">
                    <ToolsPanel />
                    <div className="mt-0.5"><AssetPanel /></div>
                    <div className="mt-1"><OptionsPanel /></div>
                    <div className={`${panel} mt-auto h-1.5`} />
                </aside>

                <div className="flex min-w-0 flex-1 flex-col justify-between">
                    <div className="flex justify-center pr-[295px]">
                        <CompassPanel />
                    </div>

                    {/* Bottom controls */}
                    <div className="flex items-end">
                        <div className="flex-1">
                            <div className="mb-px pl-[129px]"><TransformBar /></div>
                            <div className={`${panel} h-1.5`} />
                        </div>
                        <DrivePanel />
                    </div>
                </div>
            </div>

            {/* Status bar */}
            <footer className="relative flex h-6 items-center bg-[#364250]/70 pl-[124px] text-[11px] whitespace-pre text-white">
                <span className="w-[392px]">Tile: +000156+000021  Assets: 579</span>
                <span className="w-[460px]">Draws: 756 Vx: 163149 Prims: 296364 FPS: 79</span>
                <span>Network:  Length   33.6 Gradient: 1in464 at 259.6m Height:  16.93</span>
            </footer>
        </div>
    );
}
